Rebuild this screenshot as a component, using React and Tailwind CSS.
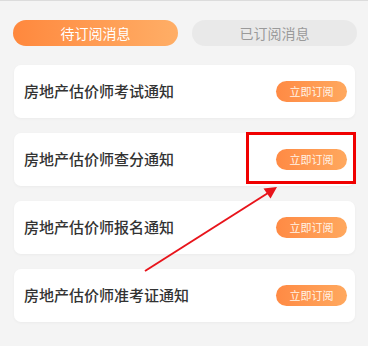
import React from "react";

const notices = [
  "房地产估价师考试通知",
  "房地产估价师查分通知",
  "房地产估价师报名通知",
  "房地产估价师准考证通知",
];

export default function App() {
  return (
    <div
      className="relative w-[368px] h-[346px] overflow-hidden bg-[#f4f4f4]"
      style={{ fontFamily: '"Noto Sans CJK SC", "Noto Sans", sans-serif' }}
    >
      <div className="h-px bg-[#dcdcdc]" />

      {/* tabs */}
      <div className="flex gap-[14px] pl-[13px] pr-[11px] pt-[19px]">
        <button className="flex-1 h-[26px] rounded-full bg-gradient-to-r from-[#ff883d] to-[#ffae66] text-white text-[14px] leading-none">
          待订阅消息
        </button>
        <button className="flex-1 h-[26px] rounded-full bg-[#e9e9e9] text-[#9a9a9a] text-[14px] leading-none">
          已订阅消息
        </button>
      </div>

      {/* list */}
      <div className="flex flex-col gap-[15px] pl-[14px] pr-[13px] mt-[19px]">
        {notices.map((title) => (
          <div
            key={title}
            className="h-[53px] flex items-center justify-between bg-white rounded-[7px] pl-[10px] pr-[8px] shadow-[0_1px_3px_rgba(0,0,0,0.04)]"
          >
            <span className="text-[15px] font-medium text-[#333]">{title}</span>
            <button className="w-[71px] h-[21px] rounded-full bg-gradient-to-r from-[#ff8a44] to-[#ffa85e] text-[#fff4e8] text-[11px] leading-none">
              立即订阅
            </button>
          </div>
        ))}
      </div>

      {/* red highlight box */}
      <div className="absolute left-[246px] top-[132px] w-[110px] h-[52px] border-[3.5px] border-[#f00000]" />

      {/* arrow */}
      <svg className="absolute inset-0 pointer-events-none" width="368" height="346">
        <line x1="145" y1="271" x2="268" y2="193" stroke="#e8141b" strokeWidth="2" />
        <polygon points="277,187 263.5,188.5 270.5,198.5" fill="#e8141b" />
      </svg>
    </div>
  );
}
